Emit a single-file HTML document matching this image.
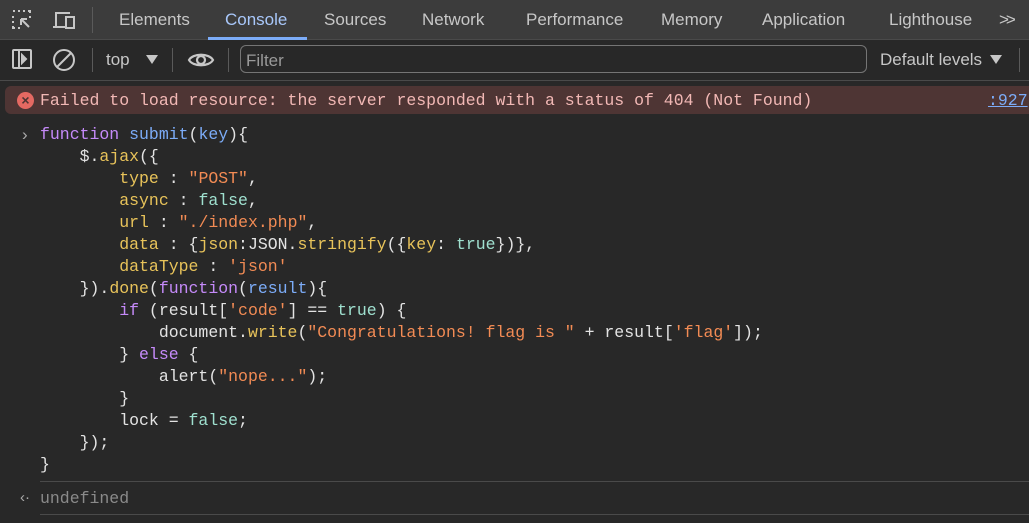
<!DOCTYPE html>
<html><head><style>
body{margin:0;width:1029px;height:523px;background:#282828;overflow:hidden;font-family:"Liberation Sans",sans-serif;color:#e3e3e3;position:relative}
.abs{position:absolute}
.tabs{left:0;top:0;width:1029px;height:39px;background:#3c3c3c;border-bottom:1px solid #4a4a4a}
.tab{position:absolute;top:10px;font-size:17px;color:#c7c7c7}
.tb{left:0;top:40px;width:1029px;height:40px;background:#282828;border-bottom:1px solid #4a4a4a}
.code{font-family:"Liberation Mono",monospace;font-size:16.5px;white-space:pre;line-height:22px}
.k{color:#c58af9}.b{color:#7cacf8}.y{color:#e8c35a}.s{color:#f28b54}.t{color:#9fe0cf}
</style></head><body>
<div class="abs tabs">
<svg class="abs" style="left:10px;top:8px" width="24" height="24" viewBox="0 0 24 24" fill="none" stroke="#c7c7c7" stroke-width="2"><path d="M3 3h2M8 3h2M13 3h2M18 3h2v2M3 8v2M3 13v2M3 18v2h2M20 8v2M8 20h2M11 11l8 8M11 11v6M11 11h6"/></svg>
<svg class="abs" style="left:51px;top:8px" width="26" height="24" viewBox="0 0 26 24" fill="none" stroke="#c7c7c7" stroke-width="2"><path d="M5 18V5h14M2 19h13M15 9h8v11h-8z"/></svg>
<div class="abs" style="left:92px;top:7px;width:1px;height:26px;background:#5a5a5a"></div>
<div class="tab" style="left:119px">Elements</div>
<div class="tab" style="left:225px;color:#a8c7fa">Console</div>
<div class="abs" style="left:208px;top:37px;width:99px;height:3px;background:#7cacf8"></div>
<div class="tab" style="left:324px">Sources</div>
<div class="tab" style="left:422px">Network</div>
<div class="tab" style="left:526px">Performance</div>
<div class="tab" style="left:661px">Memory</div>
<div class="tab" style="left:762px">Application</div>
<div class="tab" style="left:889px">Lighthouse</div>
<div class="tab" style="left:999px;letter-spacing:-3px">&gt;&gt;</div>
</div>
<div class="abs tb">
<svg class="abs" style="left:11px;top:8px" width="22" height="22" viewBox="0 0 22 22" fill="none" stroke="#c7c7c7" stroke-width="2"><rect x="2" y="2" width="18" height="18" rx="1"/><path d="M8 2v18"/><path d="M11 7l4 4-4 4z" fill="#c7c7c7"/></svg>
<svg class="abs" style="left:52px;top:8px" width="24" height="24" viewBox="0 0 24 24" fill="none" stroke="#c7c7c7" stroke-width="2"><circle cx="12" cy="12" r="10"/><path d="M5 19L19 5"/></svg>
<div class="abs" style="left:92px;top:8px;width:1px;height:24px;background:#5a5a5a"></div>
<div class="abs" style="left:106px;top:10px;font-size:17px;color:#c7c7c7">top</div>
<div class="abs" style="left:146px;top:15px;width:0;height:0;border-left:6px solid transparent;border-right:6px solid transparent;border-top:9px solid #c7c7c7"></div>
<div class="abs" style="left:172px;top:8px;width:1px;height:24px;background:#5a5a5a"></div>
<svg class="abs" style="left:187px;top:9px" width="28" height="22" viewBox="0 0 28 22" fill="none" stroke="#c7c7c7" stroke-width="2.2"><path d="M2 11C6 4 22 4 26 11C22 18 6 18 2 11z"/><circle cx="14" cy="11" r="4"/></svg>
<div class="abs" style="left:228px;top:8px;width:1px;height:24px;background:#5a5a5a"></div>
<div class="abs" style="left:240px;top:5px;width:625px;height:26px;border:1px solid #757575;border-radius:6px"></div>
<div class="abs" style="left:246px;top:11px;font-size:17px;color:#9a9a9a">Filter</div>
<div class="abs" style="left:880px;top:10px;font-size:17px;color:#c7c7c7">Default levels</div>
<div class="abs" style="left:990px;top:15px;width:0;height:0;border-left:6px solid transparent;border-right:6px solid transparent;border-top:9px solid #c7c7c7"></div>
<div class="abs" style="left:1019px;top:8px;width:1px;height:24px;background:#5a5a5a"></div>
</div>
<div class="abs" style="left:5px;top:86px;width:1024px;height:28px;background:#4e3534;border-radius:6px 0 0 6px"></div>
<div class="abs" style="left:17px;top:92px;width:17px;height:17px;border-radius:50%;background:#e46962;color:#4e3534;font-size:14px;font-weight:bold;text-align:center;line-height:17px">×</div>
<div class="abs code" style="left:40px;top:90px;color:#f2b8b5">Failed to load resource: the server responded with a status of 404 (Not Found)</div>
<div class="abs code" style="left:988px;top:90px;color:#7cacf8;text-decoration:underline">:927</div>
<div class="abs" style="left:22px;top:125px;color:#aaa;font-size:17px">›</div>
<div class="abs code" style="left:40px;top:124px"><span class="k">function</span> <span class="b">submit</span>(<span class="b">key</span>){
    $.<span class="y">ajax</span>({
        <span class="y">type</span> : <span class="s">"POST"</span>,
        <span class="y">async</span> : <span class="t">false</span>,
        <span class="y">url</span> : <span class="s">"./index.php"</span>,
        <span class="y">data</span> : {<span class="y">json</span>:JSON.<span class="y">stringify</span>({<span class="y">key</span>: <span class="t">true</span>})},
        <span class="y">dataType</span> : <span class="s">'json'</span>
    }).<span class="y">done</span>(<span class="k">function</span>(<span class="b">result</span>){
        <span class="k">if</span> (result[<span class="s">'code'</span>] == <span class="t">true</span>) {
            document.<span class="y">write</span>(<span class="s">"Congratulations! flag is "</span> + result[<span class="s">'flag'</span>]);
        } <span class="k">else</span> {
            alert(<span class="s">"nope..."</span>);
        }
        lock = <span class="t">false</span>;
    });
}</div>
<div class="abs" style="left:40px;top:481px;width:989px;height:1px;background:#4a4a4a"></div>
<div class="abs" style="left:20px;top:489px;color:#aaa;font-size:15px">‹·</div>
<div class="abs code" style="left:40px;top:488px;color:#8a8a8a">undefined</div>
<div class="abs" style="left:40px;top:514px;width:989px;height:1px;background:#4a4a4a"></div>
</body></html>
